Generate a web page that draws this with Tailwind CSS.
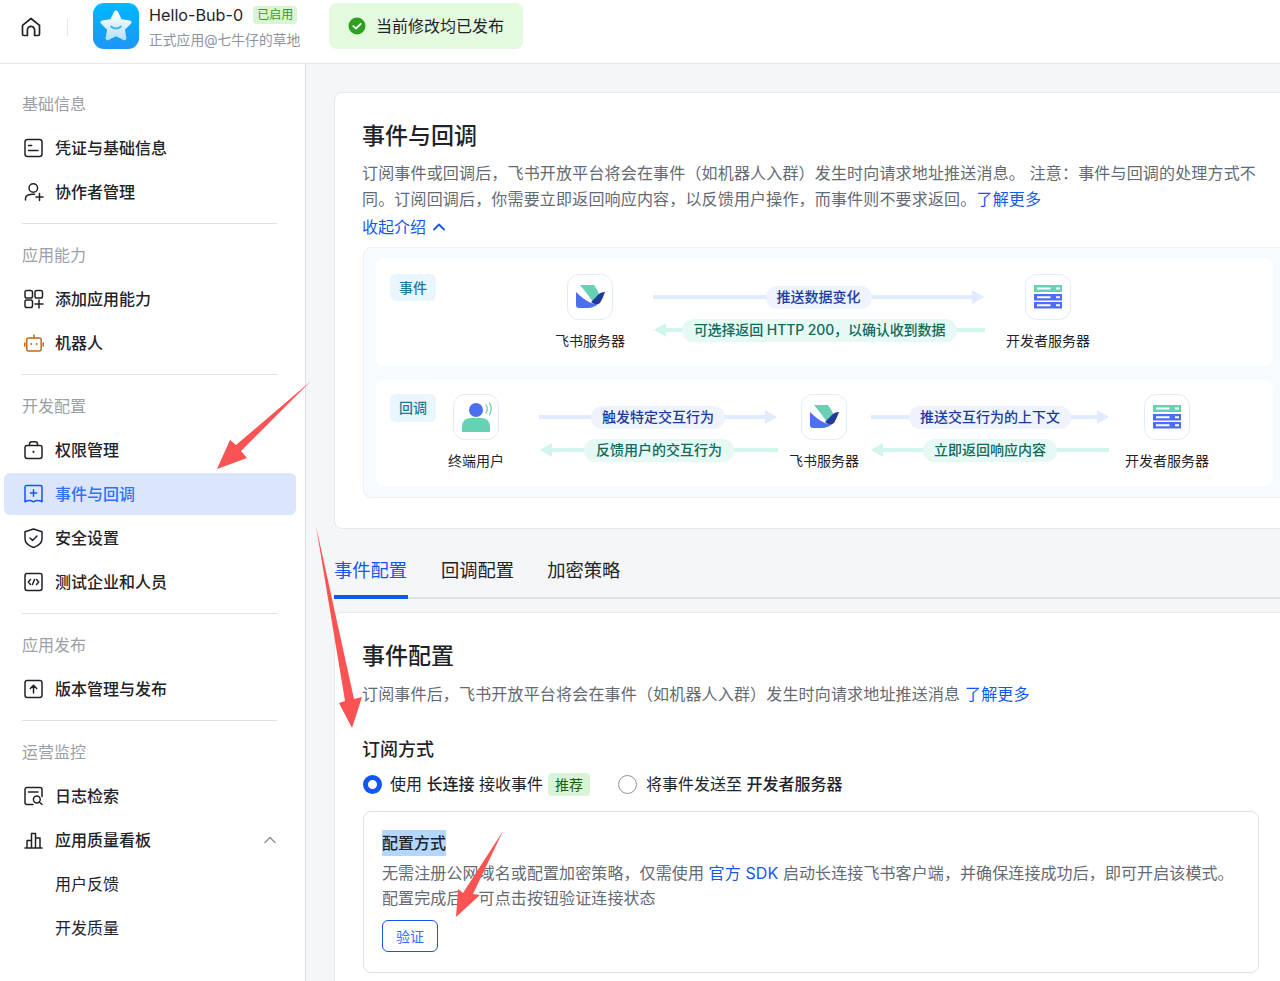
<!DOCTYPE html>
<html lang="zh-CN">
<head>
<meta charset="utf-8">
<title>事件与回调</title>
<script src="https://cdn.jsdelivr.net/npm/@tailwindcss/browser@4"></script>
</head>
<body class="relative w-[1280px] h-[981px] overflow-hidden bg-[#f5f6f7] text-[#1f2329] font-['Inter','Noto_Sans_CJK_SC',sans-serif]">
<header class="flex items-center h-[64px] bg-white border-b border-[#e4e5e7] pb-[11px]">
  <svg class="ml-[21px] mt-[2px] w-[20px] h-[20px]" viewBox="0 0 20 20" fill="none" stroke="#1f2329" stroke-width="1.7" stroke-linejoin="round"><path d="M1.5 8.3 10 1.5l8.5 6.8V17a1.5 1.5 0 0 1-1.5 1.5h-3.4V13a3.6 3.6 0 0 0-7.2 0v5.5H3A1.5 1.5 0 0 1 1.5 17Z"/></svg>
  <div class="ml-[26px] mt-[2px] w-px h-[18px] bg-[#e5e6e8]"></div>
  <svg class="ml-[25px] w-[46px] h-[46px]" viewBox="0 0 46 46"><defs><linearGradient id="lg" x1="0" y1="0" x2="0" y2="1"><stop offset="0" stop-color="#00b8ff"/><stop offset="1" stop-color="#1e95f5"/></linearGradient><linearGradient id="st" x1="0" y1="0" x2="0" y2="1"><stop offset="0" stop-color="#ffffff"/><stop offset="1" stop-color="#b8e3fb"/></linearGradient></defs><rect width="46" height="46" rx="11" fill="url(#lg)"/><path d="M23 9.5 27.2 18l9.3 1.4-6.7 6.6 1.6 9.3-8.4-4.4-8.4 4.4 1.6-9.3-6.7-6.6 9.3-1.4Z" fill="url(#st)" stroke="url(#st)" stroke-width="4" stroke-linejoin="round"/><path d="M18 23.5q5 4 10 0" fill="none" stroke="#3fb4f5" stroke-width="1.8" stroke-linecap="round"/></svg>
  <div class="ml-[10px] w-[180px] self-start mt-[3px]">
    <div class="flex items-center h-[24px]"><span class="text-[16.2px] leading-[24px]">Hello-Bub-0</span><span class="ml-[10px] px-[4px] h-[18px] rounded-[4px] bg-[#d9f5d6] text-[#2ea121] text-[12px] leading-[18px]">已启用</span></div>
    <div class="mt-[2px] text-[13.8px] leading-[22px] text-[#8f959e] whitespace-nowrap">正式应用@七牛仔的草地</div>
  </div>
  <div class="flex items-center w-[194px] h-[46px] rounded-[8px] bg-[#e4fadf] pl-[19px]">
    <svg class="w-[18px] h-[18px]" viewBox="0 0 18 18"><circle cx="9" cy="9" r="8.5" fill="#2ea121"/><path d="m5.3 9.2 2.6 2.5 4.8-4.8" fill="none" stroke="#fff" stroke-width="1.8" stroke-linecap="round" stroke-linejoin="round"/></svg>
    <span class="ml-[10px] text-[16px] leading-[24px] whitespace-nowrap">当前修改均已发布</span>
  </div>
</header>
<div class="flex h-[917px]">
<aside class="w-[306px] shrink-0 h-full bg-white border-r border-[#dee0e3] pt-[28px] text-[16px]">
  <div class="pl-[22px] h-[24px] leading-[24px] text-[#9aa0a8]">基础信息</div>
  <div class="mt-[10px]">
    <div class="flex items-center h-[44px] pl-[24px] font-medium"><svg class="w-[20px] h-[20px] mr-[11px]" viewBox="0 0 20 20" fill="none" stroke="#1f2329" stroke-width="1.5" stroke-linecap="round"><rect x="1" y="1.5" width="17" height="17" rx="2.5"/><path d="M4.5 7.5h3.2M4.5 12.5h9.5"/></svg>凭证与基础信息</div>
    <div class="flex items-center h-[44px] pl-[24px] font-medium"><svg class="w-[20px] h-[20px] mr-[11px]" viewBox="0 0 20 20" fill="none" stroke="#1f2329" stroke-width="1.5" stroke-linecap="round"><circle cx="9.3" cy="6" r="4.3"/><path d="M1.5 18v-1.5c0-3.2 2.8-4.3 7.5-4.3h1.5M12 15h7M15.5 11.5v7"/></svg>协作者管理</div>
  </div>
  <div class="mt-[9px] ml-[22px] w-[255px] h-px bg-[#dee0e3]"></div>
  <div class="mt-[19px] pl-[22px] h-[24px] leading-[24px] text-[#9aa0a8]">应用能力</div>
  <div class="mt-[10px]">
    <div class="flex items-center h-[44px] pl-[24px] font-medium"><svg class="w-[20px] h-[20px] mr-[11px]" viewBox="0 0 20 20" fill="none" stroke="#1f2329" stroke-width="1.5" stroke-linecap="round"><rect x="1" y="1.5" width="7.5" height="7.5" rx="1.8"/><rect x="11" y="1.5" width="7.5" height="7.5" rx="1.8"/><rect x="1" y="11" width="7.5" height="7.5" rx="1.8"/><path d="M11 15h8M15 11v8"/></svg>添加应用能力</div>
    <div class="flex items-center h-[44px] pl-[24px] font-medium"><svg class="w-[20px] h-[20px] mr-[11px]" viewBox="0 0 20 20" fill="none" stroke="#c8670f" stroke-width="1.5" stroke-linecap="round"><rect x="2.8" y="5" width="14.4" height="13" rx="2"/><path d="M10 2v3M.8 10v3M19.2 10v3"/><circle cx="7.3" cy="11" r=".9" fill="#c8670f" stroke="none"/><circle cx="12.7" cy="11" r=".9" fill="#c8670f" stroke="none"/></svg>机器人</div>
  </div>
  <div class="mt-[9px] ml-[22px] w-[255px] h-px bg-[#dee0e3]"></div>
  <div class="mt-[19px] pl-[22px] h-[24px] leading-[24px] text-[#9aa0a8]">开发配置</div>
  <div class="mt-[10px]">
    <div class="flex items-center h-[44px] pl-[24px] font-medium"><svg class="w-[20px] h-[20px] mr-[11px]" viewBox="0 0 20 20" fill="none" stroke="#1f2329" stroke-width="1.5" stroke-linecap="round"><rect x="1" y="5.5" width="17" height="13" rx="2.2"/><path d="M5.5 5.5V4a2.3 2.3 0 0 1 2.3-2.3h3.4A2.3 2.3 0 0 1 13.5 4v1.5"/><circle cx="9.5" cy="11.8" r="1.1" fill="#1f2329" stroke="none"/></svg>权限管理</div>
    <div class="ml-[4px] mr-[9px] my-px flex items-center h-[42px] pl-[20px] rounded-[6px] bg-[#dbe6fd] text-[#3370ff] font-medium"><svg class="w-[20px] h-[20px] mr-[11px]" viewBox="0 0 20 20" fill="none" stroke="#1456f0" stroke-width="1.5" stroke-linecap="round" stroke-linejoin="round"><path d="M1 3a1.5 1.5 0 0 1 1.5-1.5h14A1.5 1.5 0 0 1 18 3v14.8c-3-1.7-5.7-1.7-8.5 0-2.8-1.7-5.500-1.700-8.500 0Z"/><path d="M6.300 9h6.400M9.500 5.800v6.400"/></svg>事件与回调</div>
    <div class="flex items-center h-[44px] pl-[24px] font-medium"><svg class="w-[20px] h-[20px] mr-[11px]" viewBox="0 0 20 20" fill="none" stroke="#1f2329" stroke-width="1.5" stroke-linecap="round" stroke-linejoin="round"><path d="M9.500 1 18 3.800v7c0 4-4 7.200-8.500 8.700C5 18 1 14.800 1 10.800v-7Z"/><path d="m6 10 2.600 2.500 4.400-4.500"/></svg>安全设置</div>
    <div class="flex items-center h-[44px] pl-[24px] font-medium"><svg class="w-[20px] h-[20px] mr-[11px]" viewBox="0 0 20 20" fill="none" stroke="#1f2329" stroke-width="1.5" stroke-linecap="round" stroke-linejoin="round"><rect x="1" y="1.500" width="17" height="17" rx="2.200"/><path d="M6.500 7.500 4.300 10l2.200 2.500M12.500 7.500l2.200 2.500-2.200 2.500M10.500 7.500 8.500 12.500"/></svg>测试企业和人员</div>
  </div>
  <div class="mt-[9px] ml-[22px] w-[255px] h-px bg-[#dee0e3]"></div>
  <div class="mt-[19px] pl-[22px] h-[24px] leading-[24px] text-[#9aa0a8]">应用发布</div>
  <div class="mt-[10px]">
    <div class="flex items-center h-[44px] pl-[24px] font-medium"><svg class="w-[20px] h-[20px] mr-[11px]" viewBox="0 0 20 20" fill="none" stroke="#1f2329" stroke-width="1.5" stroke-linecap="round" stroke-linejoin="round"><rect x="1" y="1.500" width="17" height="17" rx="2.200"/><path d="M9.500 14V6.500M6.300 9.500l3.200-3.200 3.200 3.200"/></svg>版本管理与发布</div>
  </div>
  <div class="mt-[9px] ml-[22px] w-[255px] h-px bg-[#dee0e3]"></div>
  <div class="mt-[19px] pl-[22px] h-[24px] leading-[24px] text-[#9aa0a8]">运营监控</div>
  <div class="mt-[10px]">
    <div class="flex items-center h-[44px] pl-[24px] font-medium"><svg class="w-[20px] h-[20px] mr-[11px]" viewBox="0 0 20 20" fill="none" stroke="#1f2329" stroke-width="1.5" stroke-linecap="round" stroke-linejoin="round"><path d="M9 18.500H3A2 2 0 0 1 1 16.500V3.500a2 2 0 0 1 2-2h13a2 2 0 0 1 2 2v7M4.500 6h9.500"/><circle cx="12.800" cy="13.500" r="3.400"/><path d="m15.300 16 2.700 2.500"/></svg>日志检索</div>
    <div class="flex items-center h-[44px] pl-[24px] font-medium"><svg class="w-[20px] h-[20px] mr-[11px]" viewBox="0 0 20 20" fill="none" stroke="#1f2329" stroke-width="1.500" stroke-linecap="round" stroke-linejoin="round"><path d="M1 18h17M3 18v-7.500h4.500M7.500 18V3.500h4V18M11.500 8h4.500v10"/></svg>应用质量看板<svg class="ml-[112px] w-[14px] h-[14px]" viewBox="0 0 14 14" fill="none" stroke="#8f959e" stroke-width="1.500" stroke-linecap="round" stroke-linejoin="round"><path d="m2 9.500 5-5 5 5"/></svg></div>
    <div class="flex items-center h-[44px] pl-[55px]">用户反馈</div>
    <div class="flex items-center h-[44px] pl-[55px]">开发质量</div>
  </div>
</aside>
<main class="flex-1 min-w-0 overflow-hidden pt-[28px] pl-[28px]">
  <section class="w-[1000px] h-[437px] bg-white rounded-[8px] border border-[#e8e9eb] pt-[27px] pl-[27px]">
    <h1 class="text-[23px] leading-[32px] font-medium">事件与回调</h1>
    <p class="mt-[8px] text-[16px] leading-[26px] tracking-[0.17px] text-[#646a73] whitespace-nowrap">订阅事件或回调后，飞书开放平台将会在事件（如机器人入群）发生时向请求地址推送消息。 注意：事件与回调的处理方式不<br>同。订阅回调后，你需要立即返回响应内容，以反馈用户操作，而事件则不要求返回。<span class="text-[#1456f0]">了解更多</span></p>
    <div class="flex items-center h-[28px] mt-[1px] text-[16px] text-[#1456f0]">收起介绍<svg class="ml-[6px] w-[14px] h-[14px]" viewBox="0 0 14 14" fill="none" stroke="#1456f0" stroke-width="1.800" stroke-linecap="round" stroke-linejoin="round"><path d="m2 9.500 5-5 5 5"/></svg></div>
    <div class="mt-[6px] ml-[1px] w-[930px] h-[251px] bg-[#f6fbff] border border-[#eef0f2] rounded-[8px] pt-[10px] pl-[12px] text-[14px] leading-[22px]">
      <div class="relative w-[897px] h-[108px] bg-white rounded-[8px]">
        <span class="absolute left-[14px] top-[16px] w-[46px] h-[27px] rounded-[6px] bg-[#e9f6fd] text-[#1f7a9a] font-medium text-center leading-[27px]">事件</span>
        <div class="absolute left-[191px] top-[16px] w-[46px] h-[46px] bg-white border border-[#e1eaff] rounded-[12px]"><svg class="w-[44px] h-[44px]" viewBox="1 1 44 44"><path d="M13 11h14q4 5 6 11l-7 6Q19 18 13 11Z" fill="#68d1b4"/><path d="M9 18q8 8 15 11 5 2 9-1-5 6-13 6h-8q-3 0-3-3Z" fill="#4c6ff0"/><path d="M38 18q-5 0-8 4l-6 6q5 4 9 1 3-5 5-11Z" fill="#23399a"/></svg></div>
        <span class="absolute left-[164px] top-[72px] w-[100px] text-center">飞书服务器</span>
        <div class="absolute left-[277px] top-[27px] w-[331px] h-[24px] flex items-center justify-center"><div class="absolute left-0 right-[10px] h-[4px] bg-[#e1eaff]"></div><svg class="absolute right-0 w-[12px] h-[14px]" viewBox="0 0 12 14"><path d="M0 0 12 7 0 14Z" fill="#e1eaff"/></svg><span class="relative px-[11px] h-[23px] rounded-full bg-[#eef3fe] text-[#1c3a9c] leading-[22px] font-medium">推送数据变化</span></div>
        <div class="absolute left-[278px] top-[60px] w-[331px] h-[24px] flex items-center justify-center"><div class="absolute left-[10px] right-0 h-[4px] bg-[#d1f5ed]"></div><svg class="absolute left-0 w-[12px] h-[14px]" viewBox="0 0 12 14"><path d="M12 0 0 7 12 14Z" fill="#d1f5ed"/></svg><span class="relative px-[12px] h-[23px] rounded-full bg-[#e6f9f5] text-[#0f6b5b] leading-[22px] tracking-[-0.1px] font-medium whitespace-nowrap">可选择返回 HTTP 200，以确认收到数据</span></div>
        <div class="absolute left-[649px] top-[16px] w-[46px] h-[46px] bg-white border border-[#e1eaff] rounded-[12px]"><svg class="w-[44px] h-[44px]" viewBox="1 1 44 44"><rect x="9" y="11" width="28" height="7" fill="#68d1b4"/><rect x="9" y="20" width="28" height="6.500" fill="#4c6ff0"/><rect x="9" y="28" width="28" height="6.500" fill="#4c6ff0"/><path d="M12 13.500h13.500v2H12ZM31 13.500h4v2h-4ZM12 22.300h13.500v2H12ZM31 22.300h4v2h-4ZM12 30.300h13.500v2H12ZM31 30.300h4v2h-4Z" fill="#fff"/></svg></div>
        <span class="absolute left-[622px] top-[72px] w-[100px] text-center">开发者服务器</span>
      </div>
      <div class="relative mt-[14px] w-[897px] h-[106px] bg-white rounded-[8px]">
        <span class="absolute left-[14px] top-[14px] w-[46px] h-[28px] rounded-[6px] bg-[#e9f6fd] text-[#1f7a9a] font-medium text-center leading-[28px]">回调</span>
        <div class="absolute left-[77px] top-[14px] w-[46px] h-[46px] bg-white border border-[#e1eaff] rounded-[12px]"><svg class="w-[44px] h-[44px]" viewBox="1 1 44 44"><circle cx="23" cy="16" r="7" fill="#4c6ff0"/><path d="M9 38v-5q0-9 9-9h10q9 0 9 9v5Z" fill="#68d1b4"/><path d="M33 11q2.500 4 0 8M36.500 9q3.500 6 0 12" fill="none" stroke="#68d1b4" stroke-width="1.300" stroke-linecap="round"/></svg></div>
        <span class="absolute left-[50px] top-[70px] w-[100px] text-center">终端用户</span>
        <div class="absolute left-[163px] top-[25px] w-[238px] h-[24px] flex items-center justify-center"><div class="absolute left-0 right-[10px] h-[4px] bg-[#e1eaff]"></div><svg class="absolute right-0 w-[12px] h-[14px]" viewBox="0 0 12 14"><path d="M0 0 12 7 0 14Z" fill="#e1eaff"/></svg><span class="relative px-[11px] h-[23px] rounded-full bg-[#eef3fe] text-[#1c3a9c] leading-[22px] font-medium">触发特定交互行为</span></div>
        <div class="absolute left-[164px] top-[58px] w-[238px] h-[24px] flex items-center justify-center"><div class="absolute left-[10px] right-0 h-[4px] bg-[#d1f5ed]"></div><svg class="absolute left-0 w-[12px] h-[14px]" viewBox="0 0 12 14"><path d="M12 0 0 7 12 14Z" fill="#d1f5ed"/></svg><span class="relative px-[12px] h-[23px] rounded-full bg-[#e6f9f5] text-[#0f6b5b] leading-[22px] font-medium">反馈用户的交互行为</span></div>
        <div class="absolute left-[425px] top-[14px] w-[46px] h-[46px] bg-white border border-[#e1eaff] rounded-[12px]"><svg class="w-[44px] h-[44px]" viewBox="1 1 44 44"><path d="M13 11h14q4 5 6 11l-7 6Q19 18 13 11Z" fill="#68d1b4"/><path d="M9 18q8 8 15 11 5 2 9-1-5 6-13 6h-8q-3 0-3-3Z" fill="#4c6ff0"/><path d="M38 18q-5 0-8 4l-6 6q5 4 9 1 3-5 5-11Z" fill="#23399a"/></svg></div>
        <span class="absolute left-[398px] top-[70px] w-[100px] text-center">飞书服务器</span>
        <div class="absolute left-[495px] top-[25px] w-[238px] h-[24px] flex items-center justify-center"><div class="absolute left-0 right-[10px] h-[4px] bg-[#e1eaff]"></div><svg class="absolute right-0 w-[12px] h-[14px]" viewBox="0 0 12 14"><path d="M0 0 12 7 0 14Z" fill="#e1eaff"/></svg><span class="relative px-[11px] h-[23px] rounded-full bg-[#eef3fe] text-[#1c3a9c] leading-[22px] font-medium">推送交互行为的上下文</span></div>
        <div class="absolute left-[495px] top-[58px] w-[238px] h-[24px] flex items-center justify-center"><div class="absolute left-[10px] right-0 h-[4px] bg-[#d1f5ed]"></div><svg class="absolute left-0 w-[12px] h-[14px]" viewBox="0 0 12 14"><path d="M12 0 0 7 12 14Z" fill="#d1f5ed"/></svg><span class="relative px-[11px] h-[23px] rounded-full bg-[#e6f9f5] text-[#0f6b5b] leading-[22px] font-medium">立即返回响应内容</span></div>
        <div class="absolute left-[768px] top-[14px] w-[46px] h-[46px] bg-white border border-[#e1eaff] rounded-[12px]"><svg class="w-[44px] h-[44px]" viewBox="1 1 44 44"><rect x="9" y="11" width="28" height="7" fill="#68d1b4"/><rect x="9" y="20" width="28" height="6.500" fill="#4c6ff0"/><rect x="9" y="28" width="28" height="6.500" fill="#4c6ff0"/><path d="M12 13.500h13.500v2H12ZM31 13.500h4v2h-4ZM12 22.300h13.500v2H12ZM31 22.300h4v2h-4ZM12 30.300h13.500v2H12ZM31 30.300h4v2h-4Z" fill="#fff"/></svg></div>
        <span class="absolute left-[741px] top-[70px] w-[100px] text-center">开发者服务器</span>
      </div>
    </div>
  </section>
  <nav class="mt-[19px] flex h-[51px] w-[946px] border-b-2 border-[#dee0e3] text-[18.3px] leading-[44px]">
    <div class="w-[74px] h-[51px] text-[#1456f0] border-b-[4px] border-[#1456f0] rounded-t-[2px] whitespace-nowrap">事件配置</div>
    <div class="ml-[33px] whitespace-nowrap">回调配置</div>
    <div class="ml-[33px] whitespace-nowrap">加密策略</div>
  </nav>
  <section class="mt-[13px] w-[1000px] h-[400px] bg-white rounded-[8px] border border-[#e8e9eb] pt-[27px] pl-[27px]">
    <h2 class="text-[23px] leading-[32px] font-medium">事件配置</h2>
    <p class="mt-[9px] text-[16px] leading-[26px] tracking-[0.17px] text-[#646a73] whitespace-nowrap">订阅事件后，飞书开放平台将会在事件（如机器人入群）发生时向请求地址推送消息 <span class="text-[#1456f0]">了解更多</span></p>
    <h3 class="mt-[30px] text-[18px] leading-[26px] font-medium">订阅方式</h3>
    <div class="mt-[9px] flex items-center h-[24px] text-[16px] whitespace-nowrap">
      <span class="ml-[1px] w-[19px] h-[19px] rounded-full border-[5.500px] border-[#1456f0] bg-white"></span>
      <span class="ml-[8px]">使用 <b class="font-medium">长连接</b> 接收事件</span>
      <span class="ml-[5px] px-[7px] h-[23px] rounded-[4px] bg-[#d9f5d6] text-[#186010] text-[14px] leading-[23px]">推荐</span>
      <span class="ml-[28px] w-[19px] h-[19px] rounded-full border border-[#8f959e] bg-white"></span>
      <span class="ml-[9px]">将事件发送至 <b class="font-medium">开发者服务器</b></span>
    </div>
    <div class="mt-[15px] ml-[1px] w-[896px] h-[162px] border border-[#dee0e3] rounded-[8px] pt-[18px] pl-[18px]">
      <div class="h-[26px] leading-[26px] text-[16px] font-medium"><span class="bg-[#b3d7ff] inline-block h-[26px]">配置方式</span></div>
      <p class="mt-[5px] text-[16px] leading-[25px] tracking-[0.1px] text-[#646a73] whitespace-nowrap">无需注册公网域名或配置加密策略，仅需使用 <span class="text-[#1456f0]">官方 SDK</span> 启动长连接飞书客户端，并确保连接成功后，即可开启该模式。<br>配置完成后，可点击按钮验证连接状态</p>
      <button class="mt-[9px] w-[56px] h-[32px] rounded-[6px] border-[1.500px] border-[#1456f0] bg-white text-[#3370ff] text-[14px]">验证</button>
    </div>
  </section>
</main>
</div>
<svg class="absolute inset-0 w-[1280px] h-[981px] pointer-events-none" viewBox="0 0 1280 981" fill="#fb5353">
  <polygon points="311,381 236,445 230,440 217,469 247,458 241,451"/>
  <polygon points="316,526 345,701 339,703 352,728 362,697 354,699"/>
  <polygon points="503,831 463,893 458,889 456,917 480,895 473,894"/>
</svg>
</body>
</html>
